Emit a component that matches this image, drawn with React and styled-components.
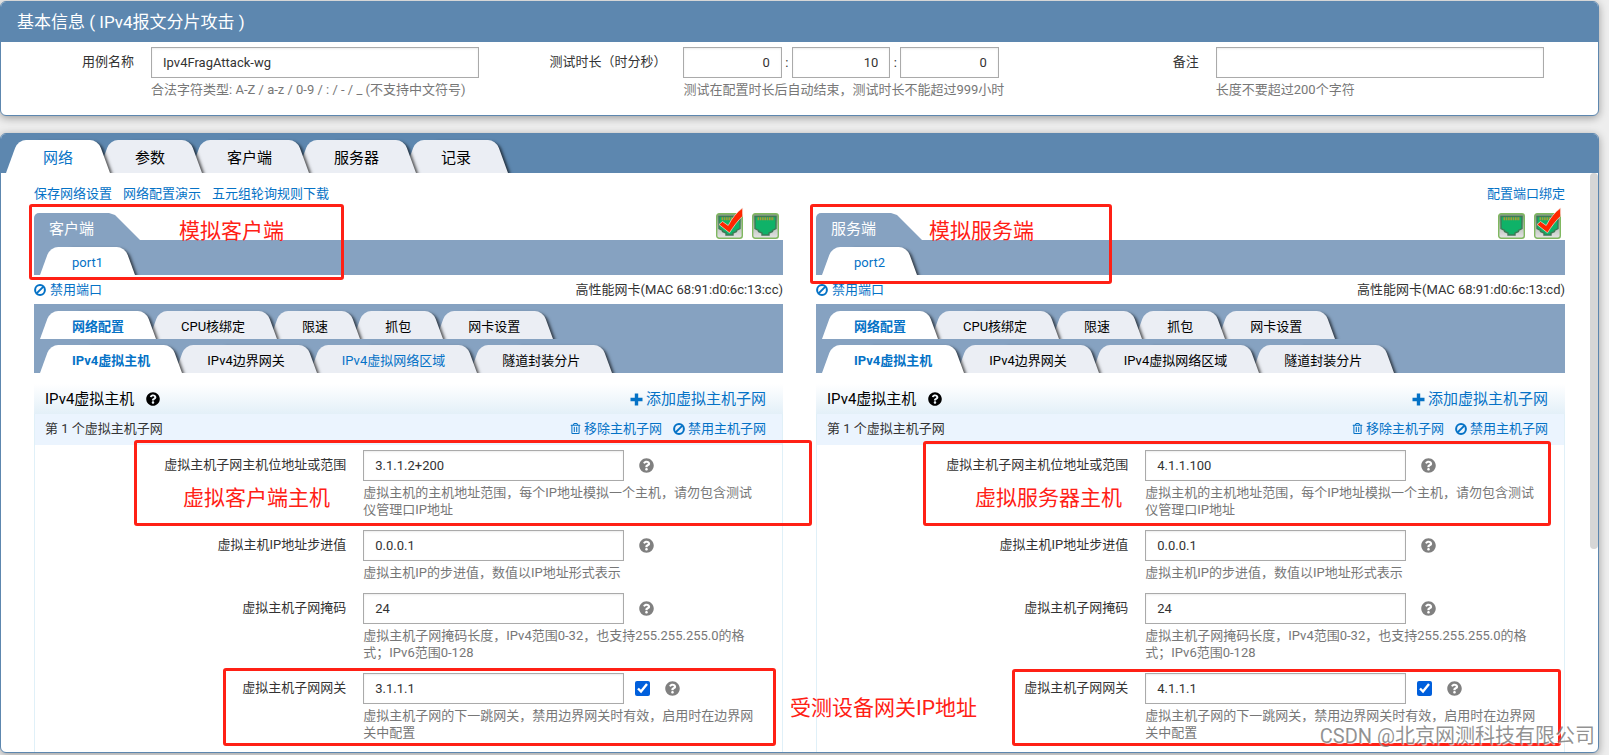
/* eslint-disable react/prop-types */
import React, { useId, useState } from 'react';
import styled, { createGlobalStyle, css } from 'styled-components';
import { FaQuestionCircle, FaRegTrashAlt } from 'react-icons/fa';

const GlobalStyle = createGlobalStyle`
  * {
    box-sizing: border-box;
  }
  body {
    margin: 0;
    background: #eeeeee;
    color: #333333;
    font-family: Roboto, "Noto Sans CJK SC", sans-serif;
    font-size: 13px;
    line-height: 17px;
  }
  button, input {
    font: inherit;
    color: inherit;
  }
`;

// Page

const Page = styled.div`
  position: relative;
  display: flex;
  flex-direction: column;
  gap: 17px;
  height: 100vh;
  padding: 1px 10px 2px 0;
  overflow: hidden;
`;

const Panel = styled.section`
  display: flex;
  flex-direction: column;
  flex: ${(props) => (props.$grow ? '1 1 0' : 'none')};
  min-height: 0;
  border: 1px solid #5d87af;
  border-radius: 6px;
  background: #ffffff;
  box-shadow: 0 2px 8px rgba(0, 0, 0, 0.35);
  overflow: hidden;
`;

const PanelTitle = styled.h1`
  margin: 0;
  padding: 0 16px;
  background: #5d87af;
  color: #ffffff;
  font-size: 17px;
  font-weight: 400;
  line-height: 40px;
`;

// Inputs

const TextInput = styled.input`
  display: block;
  width: ${(props) => props.$width || '100%'};
  min-width: 0;
  height: 31px;
  padding: 0 11px;
  border: 1px solid #aaaaaa;
  border-radius: 0;
  background: #ffffff;
  box-shadow: inset 0 1px 2px rgba(0, 0, 0, 0.08);
  text-align: ${(props) => props.$align || 'left'};
`;

const Hint = styled.p`
  margin: 3px 0 0;
  color: #777777;
`;

// Case info form

const InfoForm = styled.form`
  display: grid;
  grid-template-columns: repeat(3, 1fr);
  padding: 5px 0 17px;
`;

const InfoField = styled.div`
  display: grid;
  grid-template-columns: 25% 1fr;
`;

const InfoLabel = styled.label`
  line-height: 29px;
  text-align: right;
  white-space: nowrap;
`;

const InfoBody = styled.div`
  padding: 0 54px 0 17px;
  white-space: nowrap;
`;

const TimeRow = styled.div`
  display: flex;
  align-items: center;
`;

const Colon = styled.span`
  width: 10px;
  text-align: center;
`;

// Slanted tabs

const TabBar = styled.div`
  display: flex;
  flex: none;
  height: ${(props) => (props.$large ? '39px' : '35px')};
  padding: ${(props) => (props.$large ? '6px 0 0 5px' : '7px 0 0 6px')};
  background: ${(props) => (props.$large ? '#5d87af' : '#86a2c1')};
  overflow: hidden;
  & + & {
    height: 34px;
    padding-top: 6px;
  }
`;

const TabButton = styled.button`
  position: relative;
  z-index: ${(props) => props.$order};
  height: 100%;
  padding: ${(props) => (props.$large ? '4px 37px 0' : '2px 32px 0')};
  margin: 0 ${(props) => (props.$large ? '-12px' : '-7px')} 0 0;
  border: 0;
  background: none;
  color: ${(props) => (props.$active || props.$linked ? '#0572c6' : '#000000')};
  font-size: ${(props) => (props.$large ? '15px' : '13px')};
  font-weight: ${(props) => (props.$active && props.$bold ? '700' : '400')};
  white-space: nowrap;
  cursor: pointer;

  &::before,
  &::after {
    content: '';
    position: absolute;
    top: 0;
    bottom: 0;
    width: 60%;
    background: ${(props) => (props.$active ? '#ffffff' : '#ebeef4')};
  }
  &::before {
    z-index: -1;
    left: 0;
    border-radius: 8px 0 0 0;
    transform: skewX(-20deg);
    transform-origin: bottom left;
  }
  &::after {
    z-index: -2;
    right: 0;
    border-radius: 0 8px 0 0;
    box-shadow: 2px 2px 3px rgba(0, 0, 0, 0.65);
    transform: skewX(20deg);
    transform-origin: bottom right;
  }
`;

// Network page

const ScrollRow = styled.div`
  display: flex;
  flex: 1 1 0;
  min-height: 0;
`;

const ScrollBody = styled.div`
  flex: 1;
  min-width: 0;
  padding: 12px 25px 0 33px;
  overflow: hidden;
`;

const Rail = styled.div`
  width: 8px;
  flex: none;
`;

const Thumb = styled.div`
  height: 65%;
  border-radius: 4px;
  background: #d6d6d6;
`;

const Spread = styled.div`
  display: flex;
  align-items: center;
  justify-content: space-between;
`;

const Links = styled.div`
  display: flex;
  gap: 11px;
`;

const Link = styled.a`
  display: inline-flex;
  align-items: center;
  gap: ${(props) => props.$gap || '4px'};
  color: #0572c6;
  text-decoration: none;
`;

const Columns = styled.div`
  display: grid;
  grid-template-columns: 1fr 1fr;
  gap: 33px;
  height: 100%;
  padding-top: 11px;
`;

const Port = styled.article`
  position: relative;
  display: flex;
  flex-direction: column;
`;

const SideTab = styled.h2`
  margin: 0;
  height: 27px;
  padding: 2px 46px 0 15px;
  border-radius: 5px 0 0 0;
  background: #86a2c1;
  clip-path: polygon(0 0, calc(100% - 31px) 0, calc(100% - 25px) 2px, 100% 100%, 0 100%);
  color: #ffffff;
  font-size: 15px;
  font-weight: 400;
  line-height: 28px;
`;

const Jacks = styled.div`
  display: flex;
  gap: 9px;
  padding-right: 4px;
  align-self: flex-start;
`;

const JackSvg = styled.svg`
  display: block;
  width: 27px;
  height: 26px;
  overflow: visible;
`;

const NicRow = styled(Spread)`
  height: 29px;
`;

const SectionHead = styled(Spread)`
  height: 30px;
  margin-top: 11px;
  padding: 0 17px 0 11px;
  background: linear-gradient(#ffffff, #e3f0f8);
  font-size: 15px;
`;

const SectionTitle = styled.h3`
  display: flex;
  align-items: center;
  gap: 12px;
  margin: 0;
  color: #000000;
  font-size: 15px;
  font-weight: 400;
`;

const Subnet = styled.div`
  flex: 1;
  border: solid #e0f0f8;
  border-width: 0 1px;
`;

const SubnetHead = styled(Spread)`
  height: 31px;
  padding: 0 16px 2px 10px;
  background: #ebf4fe;
`;

const FieldRow = styled.div`
  display: grid;
  grid-template-columns: 5fr 7fr;
  padding-bottom: 12px;
  &:first-of-type {
    padding-top: 5px;
  }
`;

const FieldLabel = styled.label`
  line-height: 29px;
  text-align: right;
`;

const FieldBody = styled.div`
  padding: 0 23px 0 17px;
`;

const FieldLine = styled.div`
  display: flex;
  align-items: center;
`;

const Check = styled.input.attrs({ type: 'checkbox' })`
  width: 15px;
  height: 15px;
  margin: 0 0 0 11px;
  accent-color: #005fdc;
`;

const HelpIcon = styled(FaQuestionCircle)`
  width: 15px;
  height: 15px;
  margin-left: 15px;
  color: #808080;
`;

// Red notes over the form

const note = css`
  position: absolute;
  z-index: 20;
  left: ${(props) => props.$left}px;
  top: ${(props) => props.$top}px;
  pointer-events: none;
`;

const NoteBox = styled.div`
  ${note}
  width: ${(props) => props.$width}px;
  height: ${(props) => props.$height}px;
  border: 3px solid #ff2015;
  border-radius: 3px;
`;

const NoteText = styled.div`
  ${note}
  color: #ff2015;
  font-size: 21px;
  line-height: 30px;
  white-space: nowrap;
`;

const Watermark = styled.div`
  position: absolute;
  z-index: 30;
  right: 14px;
  bottom: 4px;
  color: rgba(110, 110, 110, 0.75);
  font-size: 20px;
  line-height: 30px;
  text-shadow: 1px 1px 1px rgba(255, 255, 255, 0.8);
  white-space: nowrap;
  pointer-events: none;
`;

const BanIcon = () => (
  <svg width="12" height="12" viewBox="0 0 12 12" fill="none" stroke="currentColor" strokeWidth="2">
    <circle cx="6" cy="6" r="4.9" />
    <path d="M9.4 2.6 2.6 9.4" />
  </svg>
);

const PlusIcon = () => (
  <svg width="13" height="13" viewBox="0 0 13 13" fill="none" stroke="currentColor" strokeWidth="3.4">
    <path d="M6.5 0.5V12.5M0.5 6.5H12.5" />
  </svg>
);

const Jack = ({ checked }) => {
  const id = useId();
  return (
    <JackSvg viewBox="0 0 27 26">
      <defs>
        <linearGradient id={id} x1="0" y1="0" x2="0" y2="1">
          <stop offset="0" stopColor="#7f9580" />
          <stop offset="0.45" stopColor="#b4bcb4" />
          <stop offset="1" stopColor="#e6e4e6" />
        </linearGradient>
      </defs>
      <rect x="0.7" y="0.7" width="25.6" height="24.6" rx="2.5" fill={`url(#${id})`} stroke="#80b860" strokeWidth="1.4" />
      <path
        d="M3 3.5H24V15.5L20.5 17.5V18.5L17 20V22H10V20L6.5 18.5V17.5L3 15.5Z"
        fill="#0fb268"
        stroke="#3d7a55"
        strokeWidth="1.4"
      />
      <path d="M5.5 5.8H22" stroke="#a89a35" strokeWidth="3" strokeDasharray="1.6 0.7" />
      {checked && (
        <path
          d="M3 11.5 6.5 8.5 12.2 12.5C16 5 21 -1 26.6 -5V3.2C21.5 8 17.5 13.5 13.5 19.8Z"
          fill="#ff2600"
          stroke="#f3e2da"
          strokeWidth="0.7"
        />
      )}
    </JackSvg>
  );
};

const Tabs = ({ tabs, large, bold, linked }) => {
  const [active, setActive] = useState(0);
  return (
    <TabBar role="tablist" $large={large}>
      {tabs.map((tab, index) => (
        <TabButton
          key={tab}
          type="button"
          role="tab"
          aria-selected={index === active}
          $order={tabs.length - index}
          $active={index === active}
          $linked={tab === linked}
          $large={large}
          $bold={bold}
          onClick={() => setActive(index)}
        >
          {tab}
        </TabButton>
      ))}
    </TabBar>
  );
};

const Field = ({ label, value, hint, toggle }) => {
  const id = useId();
  return (
    <FieldRow>
      <FieldLabel htmlFor={id}>{label}</FieldLabel>
      <FieldBody>
        <FieldLine>
          <TextInput id={id} defaultValue={value} $width="66%" />
          {toggle && <Check defaultChecked aria-label={label} />}
          <HelpIcon />
        </FieldLine>
        <Hint>{hint}</Hint>
      </FieldBody>
    </FieldRow>
  );
};

const ports = [
  {
    side: '客户端',
    port: 'port1',
    mac: '68:91:d0:6c:13:cc',
    jacks: [true, false],
    linked: 'IPv4虚拟网络区域',
    hosts: '3.1.1.2+200',
    gateway: '3.1.1.1',
    boxes: [[-5, -9, 315, 76], [100, 227, 678, 86], [189, 455, 553, 78]],
    notes: [[145, 3, '模拟客户端'], [149, 270, '虚拟客户端主机'], [756, 480, '受测设备网关IP地址']],
  },
  {
    side: '服务端',
    port: 'port2',
    mac: '68:91:d0:6c:13:cd',
    jacks: [false, true],
    hosts: '4.1.1.100',
    gateway: '4.1.1.1',
    boxes: [[-6, -9, 302, 80], [107, 228, 628, 85], [196, 456, 549, 77]],
    notes: [[113, 3, '模拟服务端'], [159, 270, '虚拟服务器主机']],
  },
];

const PortPanel = ({ data }) => (
  <Port>
    <Spread>
      <SideTab>{data.side}</SideTab>
      <Jacks>
        {data.jacks.map((checked, index) => <Jack key={index} checked={checked} />)}
      </Jacks>
    </Spread>
    <Tabs tabs={[data.port]} />
    <NicRow>
      <Link href="#disable-port">
        <BanIcon />
        禁用端口
      </Link>
      <span>{`高性能网卡(MAC ${data.mac})`}</span>
    </NicRow>
    <Tabs bold tabs={['网络配置', 'CPU核绑定', '限速', '抓包', '网卡设置']} />
    <Tabs
      bold
      linked={data.linked}
      tabs={['IPv4虚拟主机', 'IPv4边界网关', 'IPv4虚拟网络区域', '隧道封装分片']}
    />
    <SectionHead>
      <SectionTitle>
        IPv4虚拟主机
        <FaQuestionCircle size={14} />
      </SectionTitle>
      <Link href="#add-subnet" $gap="3px">
        <PlusIcon />
        添加虚拟主机子网
      </Link>
    </SectionHead>
    <Subnet>
      <SubnetHead>
        <span>第 1 个虚拟主机子网</span>
        <Links>
          <Link href="#remove-subnet" $gap="3px">
            <FaRegTrashAlt size={11} />
            移除主机子网
          </Link>
          <Link href="#disable-subnet" $gap="3px">
            <BanIcon />
            禁用主机子网
          </Link>
        </Links>
      </SubnetHead>
      <form>
        <Field
          label="虚拟主机子网主机位地址或范围"
          value={data.hosts}
          hint="虚拟主机的主机地址范围，每个IP地址模拟一个主机，请勿包含测试仪管理口IP地址"
        />
        <Field
          label="虚拟主机IP地址步进值"
          value="0.0.0.1"
          hint="虚拟主机IP的步进值，数值以IP地址形式表示"
        />
        <Field
          label="虚拟主机子网掩码"
          value="24"
          hint="虚拟主机子网掩码长度，IPv4范围0-32，也支持255.255.255.0的格式；IPv6范围0-128"
        />
        <Field
          label="虚拟主机子网网关"
          value={data.gateway}
          hint="虚拟主机子网的下一跳网关，禁用边界网关时有效，启用时在边界网关中配置"
          toggle
        />
      </form>
    </Subnet>
    {data.boxes.map(([left, top, width, height]) => (
      <NoteBox key={top} $left={left} $top={top} $width={width} $height={height} />
    ))}
    {data.notes.map(([left, top, text]) => (
      <NoteText key={text} $left={left} $top={top}>{text}</NoteText>
    ))}
  </Port>
);

const App = () => (
  <>
    <GlobalStyle />
    <Page lang="zh-CN">
      <Panel>
        <PanelTitle>基本信息 ( IPv4报文分片攻击 )</PanelTitle>
        <InfoForm>
          <InfoField>
            <InfoLabel htmlFor="case-name">用例名称</InfoLabel>
            <InfoBody>
              <TextInput id="case-name" defaultValue="Ipv4FragAttack-wg" />
              <Hint>合法字符类型: A-Z / a-z / 0-9 / : / - / _ (不支持中文符号)</Hint>
            </InfoBody>
          </InfoField>
          <InfoField>
            <InfoLabel htmlFor="hours">测试时长（时分秒）</InfoLabel>
            <InfoBody>
              <TimeRow>
                <TextInput id="hours" defaultValue="0" $width="30%" $align="right" />
                <Colon>:</Colon>
                <TextInput aria-label="分" defaultValue="10" $width="30%" $align="right" />
                <Colon>:</Colon>
                <TextInput aria-label="秒" defaultValue="0" $width="30%" $align="right" />
              </TimeRow>
              <Hint>测试在配置时长后自动结束，测试时长不能超过999小时</Hint>
            </InfoBody>
          </InfoField>
          <InfoField>
            <InfoLabel htmlFor="remark">备注</InfoLabel>
            <InfoBody>
              <TextInput id="remark" />
              <Hint>长度不要超过200个字符</Hint>
            </InfoBody>
          </InfoField>
        </InfoForm>
      </Panel>
      <Panel $grow>
        <Tabs large tabs={['网络', '参数', '客户端', '服务器', '记录']} />
        <ScrollRow>
          <ScrollBody>
            <Spread>
              <Links>
                <Link href="#save">保存网络设置</Link>
                <Link href="#demo">网络配置演示</Link>
                <Link href="#rules">五元组轮询规则下载</Link>
              </Links>
              <Link href="#bind">配置端口绑定</Link>
            </Spread>
            <Columns>
              {ports.map((data) => <PortPanel key={data.port} data={data} />)}
            </Columns>
          </ScrollBody>
          <Rail>
            <Thumb />
          </Rail>
        </ScrollRow>
      </Panel>
      <Watermark>CSDN @北京网测科技有限公司</Watermark>
    </Page>
  </>
);

export default App;
